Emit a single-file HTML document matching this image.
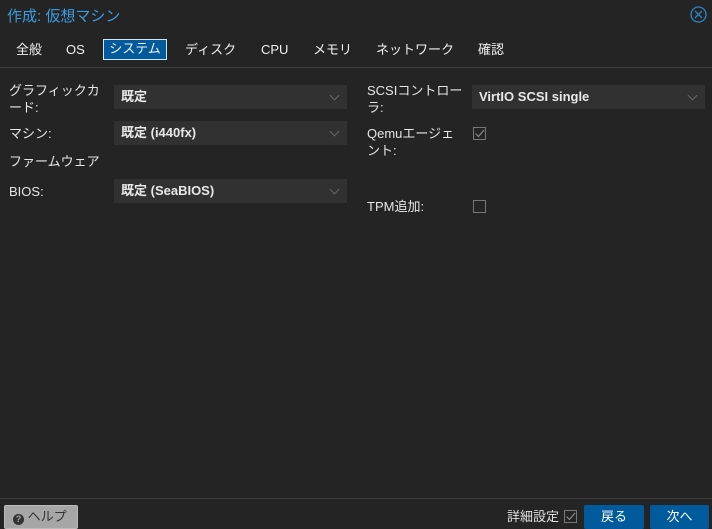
<!DOCTYPE html>
<html><head><meta charset="utf-8"><style>
*{box-sizing:border-box;margin:0;padding:0}
body{width:712px;height:529px;background:#242424;font-family:"Liberation Sans","Noto Sans CJK JP",sans-serif;color:#e0e0e0;font-size:13px;position:relative;overflow:hidden}
.a{position:absolute;white-space:nowrap}
.title{left:7px;top:5px;font-size:15px;color:#3b9de0}
.tab{top:40px;font-size:13px;color:#f0f0f0;height:20px;line-height:19px}
.sep{left:0;width:712px;height:1px;background:#3e3e3e}
.lbl{font-size:13px;line-height:17px;color:#e6e6e6}
.cb{height:24px;background:#313131;font-size:13px;line-height:24px;padding-left:7px;font-weight:bold;color:#e8e8e8}
.cb:after{content:"";position:absolute;right:9px;top:7px;width:6px;height:6px;border-right:1px solid #666;border-bottom:1px solid #666;transform:rotate(45deg)}
.chk{width:13px;height:13px;border:1px solid #777}
.btn{height:24px;background:#005a9c;color:#fff;text-align:center;line-height:24px;border-radius:2px}
</style></head><body>
<div class="a title">作成: 仮想マシン</div>
<svg class="a" style="left:690px;top:6px" width="17" height="17"><circle cx="8.5" cy="8.5" r="7.5" fill="none" stroke="#2a86c6" stroke-width="1.3"/><path d="M5 5L12 12M12 5L5 12" stroke="#2a86c6" stroke-width="1.3"/></svg>
<div class="a tab" style="left:16px">全般</div>
<div class="a tab" style="left:66px">OS</div>
<div class="a tab" style="left:103px;width:64px;top:39px;height:21px;background:#005a9c;border:1px solid #cfe3f3;text-align:center;line-height:18px">システム</div>
<div class="a tab" style="left:185px">ディスク</div>
<div class="a tab" style="left:261px">CPU</div>
<div class="a tab" style="left:313px">メモリ</div>
<div class="a tab" style="left:376px">ネットワーク</div>
<div class="a tab" style="left:478px">確認</div>
<div class="a sep" style="top:67px"></div>

<div class="a lbl" style="left:9px;top:82px">グラフィックカ<br>ード:</div>
<div class="a cb" style="left:114px;top:85px;width:233px">既定</div>
<div class="a lbl" style="left:9px;top:125px">マシン:</div>
<div class="a cb" style="left:114px;top:121px;width:233px">既定 (i440fx)</div>
<div class="a lbl" style="left:9px;top:153px">ファームウェア</div>
<div class="a lbl" style="left:9px;top:183px">BIOS:</div>
<div class="a cb" style="left:114px;top:179px;width:233px">既定 (SeaBIOS)</div>

<div class="a lbl" style="left:367px;top:82px">SCSIコントロー<br>ラ:</div>
<div class="a cb" style="left:472px;top:85px;width:233px">VirtIO SCSI single</div>
<div class="a lbl" style="left:367px;top:125px">Qemuエージェ<br>ント:</div>
<div class="a chk" style="left:473px;top:127px"></div>
<svg class="a" style="left:473px;top:127px" width="13" height="13"><path d="M2.5 6.5L5.5 9.5L11 3" fill="none" stroke="#888" stroke-width="1.2"/></svg>
<div class="a lbl" style="left:367px;top:198px">TPM追加:</div>
<div class="a chk" style="left:473px;top:200px"></div>

<div class="a sep" style="top:498px"></div>
<div class="a" style="left:4px;top:505px;width:74px;height:24px;background:#a6a6a6;border:1px solid #bbb;border-radius:2px;color:#333;line-height:21px;padding-left:8px;font-size:13px"><span style="display:inline-block;width:11px;height:11px;border-radius:50%;background:#333;color:#a6a6a6;font-size:9px;line-height:11px;text-align:center;font-weight:bold;vertical-align:-1px">?</span> ヘルプ</div>
<div class="a" style="left:507px;top:508px;font-size:13px;line-height:17px">詳細設定</div>
<div class="a chk" style="left:564px;top:510px"></div>
<svg class="a" style="left:564px;top:510px" width="13" height="13"><path d="M2.5 6.5L5.5 9.5L11 3" fill="none" stroke="#888" stroke-width="1.2"/></svg>
<div class="a btn" style="left:584px;top:505px;width:60px">戻る</div>
<div class="a btn" style="left:650px;top:505px;width:59px">次へ</div>
</body></html>
